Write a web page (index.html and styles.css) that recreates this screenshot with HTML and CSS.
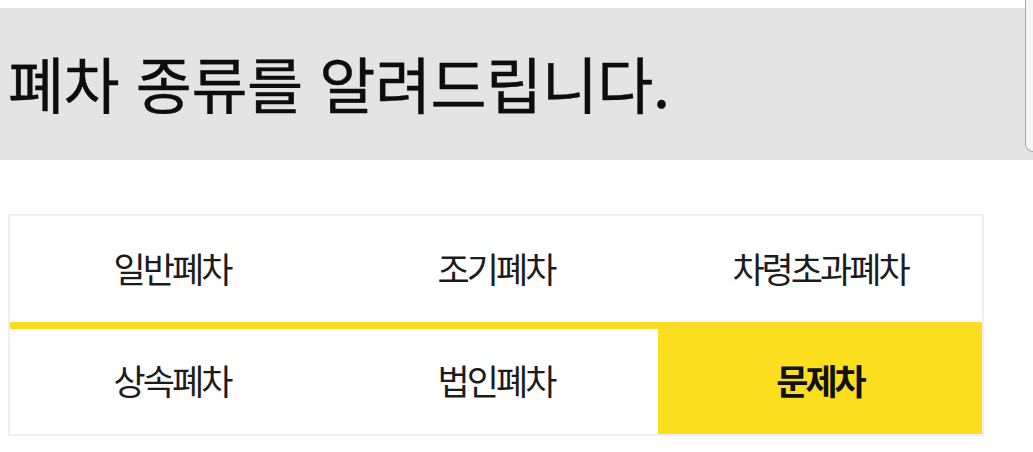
FILE: index.html
```html
<!DOCTYPE html>
<html lang="ko">
<head>
<meta charset="utf-8">
<link rel="stylesheet" href="styles.css">
</head>
<body>
<div class="header">
  <h1 class="title">폐차 종류를 알려드립니다.</h1>
</div>
<div class="edge"></div>
<div class="tabs">
  <div class="tab">일반폐차</div>
  <div class="tab">조기폐차</div>
  <div class="tab">차령초과폐차</div>
  <div class="tab bottom">상속폐차</div>
  <div class="tab bottom">법인폐차</div>
  <div class="tab bottom active">문제차</div>
</div>
</body>
</html>
```
FILE: styles.css
```css
html, body {
  margin: 0;
  padding: 0;
  background: #ffffff;
}
body {
  font-family: "Noto Sans CJK KR", "Noto Sans", sans-serif;
  color: #1a1a1a;
  width: 1033px;
  height: 452px;
  overflow: hidden;
  position: relative;
}
.header {
  margin-top: 8px;
  height: 152px;
  background: #e4e4e4;
  display: flex;
  align-items: center;
  padding-left: 8px;
}
.title {
  margin: 0;
  font-size: 61px;
  font-weight: 400;
  letter-spacing: -0.5px;
  color: #0d0d0d;
  line-height: 1;
  padding-bottom: 4px;
  -webkit-text-stroke: 0.4px #0d0d0d;
}
.edge {
  position: absolute;
  top: 0;
  right: 0;
  width: 7px;
  height: 151px;
  background: #f6f6f6;
  border-left: 1px solid #a8a8a8;
  border-bottom: 1px solid #a8a8a8;
  border-bottom-left-radius: 9px;
}
.tabs {
  margin: 54px 0 0 8px;
  width: 972px;
  border: 2px solid #efefef;
  display: grid;
  grid-template-columns: 1fr 1fr 1fr;
  grid-template-rows: 106px 112px;
}
.tab {
  display: flex;
  align-items: center;
  justify-content: center;
  font-size: 35px;
  letter-spacing: -3px;
  color: #1c1c1c;
  background: #fff;
  padding-bottom: 4px;
}
.tab.bottom {
  border-top: 7px solid #f9dc25;
}
.tab.active {
  background: #fbdf1f;
  font-weight: 700;
  color: #111;
}
```
